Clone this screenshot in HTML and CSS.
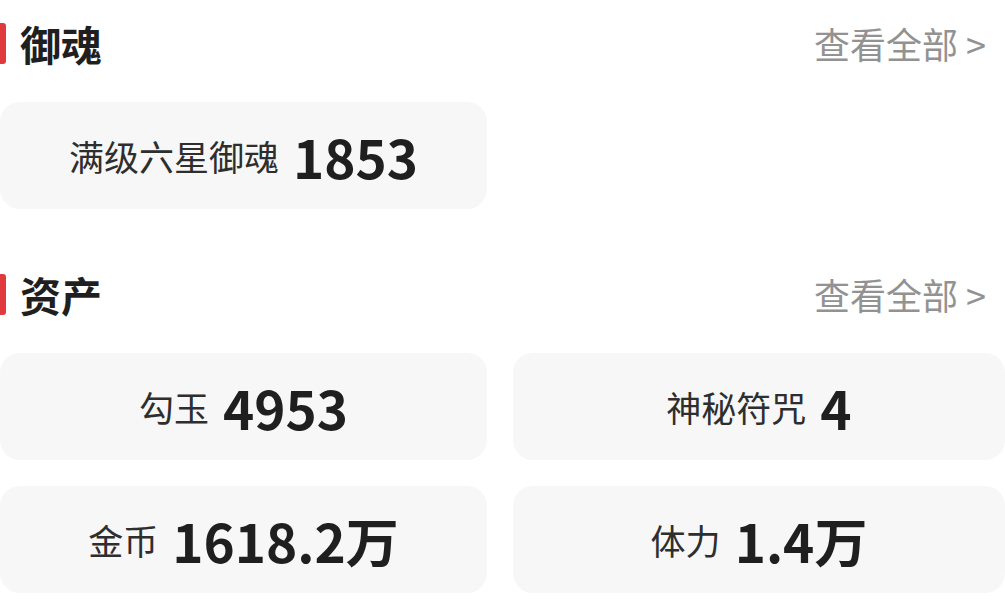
FILE: index.html
```html
<!DOCTYPE html>
<html lang="zh">
<head>
<meta charset="utf-8">
<link rel="stylesheet" href="styles.css">
</head>
<body>
<section class="section">
  <div class="head">
    <div class="title"><span class="bar"></span>御魂</div>
    <div class="more">查看全部 &gt;</div>
  </div>
  <div class="grid">
    <div class="card"><span class="label">满级六星御魂</span><span class="num">1853</span></div>
  </div>
</section>
<section class="section second">
  <div class="head">
    <div class="title"><span class="bar"></span>资产</div>
    <div class="more">查看全部 &gt;</div>
  </div>
  <div class="grid">
    <div class="card"><span class="label">勾玉</span><span class="num">4953</span></div>
    <div class="card"><span class="label">神秘符咒</span><span class="num">4</span></div>
    <div class="card"><span class="label">金币</span><span class="num">1618.2万</span></div>
    <div class="card"><span class="label">体力</span><span class="num">1.4万</span></div>
  </div>
</section>
</body>
</html>
```
FILE: styles.css
```css
html, body {
  margin: 0;
  padding: 0;
  background: #ffffff;
}
body {
  width: 1005px;
  font-family: "Noto Sans CJK SC", "Noto Sans", sans-serif;
  color: #222;
}
.section.second {
  margin-top: 42px;
}
.head {
  height: 86px;
  display: flex;
  align-items: center;
  justify-content: space-between;
}
.title {
  display: flex;
  align-items: center;
  font-size: 41px;
  font-weight: 700;
  color: #1f1f1f;
  line-height: 1;
}
.bar {
  width: 6px;
  height: 41px;
  background: #e0393e;
  border-radius: 0 3px 3px 0;
  margin-right: 14px;
}
.more {
  font-size: 36px;
  color: #929292;
  padding-right: 19px;
  line-height: 1;
}
.grid {
  margin-top: 16px;
  display: grid;
  grid-template-columns: 487px 492px;
  column-gap: 26px;
  row-gap: 26px;
}
.card {
  height: 107px;
  background: #f7f7f7;
  border-radius: 20px;
  display: flex;
  align-items: center;
  justify-content: center;
}
.label {
  font-size: 35px;
  color: #2e2e2e;
  margin-right: 14px;
}
.num {
  font-size: 53px;
  font-weight: 700;
  color: #1f1f1f;
}
```
